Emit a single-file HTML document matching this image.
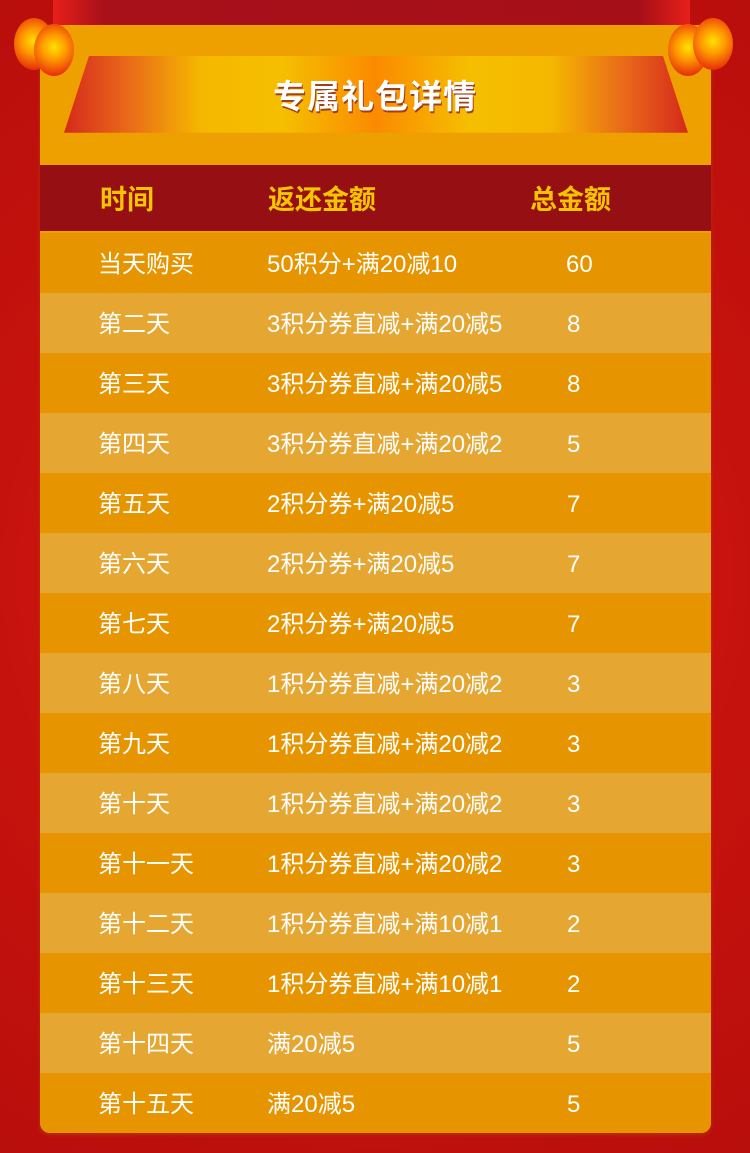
<!DOCTYPE html>
<html><head><meta charset="utf-8"><style>
*{margin:0;padding:0;box-sizing:border-box}
body{width:750px;height:1153px;overflow:hidden;background:#c8130f;font-family:"Liberation Sans","Noto Sans CJK SC",sans-serif;position:relative}
.bg{position:absolute;inset:0;background:radial-gradient(circle at 50% 50%,#d8180f,#b80e0c)}
.top{position:absolute;left:53px;top:0;width:637px;height:26px;background:linear-gradient(90deg,#e8201a 0,#a8101a 8%,#a50f18 92%,#e8201a 100%)}
.panel{position:absolute;left:40px;top:25px;width:671px;height:1108px;background:#eda000;border-radius:0 0 10px 10px;overflow:hidden;box-shadow:0 2px 4px #b8300a}
.banner{position:absolute;left:64px;top:56px;width:624px;height:80px;clip-path:polygon(4% 0,96% 0,100% 96%,0 96%);background:linear-gradient(90deg,#d52a1a 0,#e9681a 10%,#f5b800 22%,#f5bf00 35%,#fb8a00 50%,#f5bf00 65%,#f5b800 78%,#e9681a 90%,#d52a1a 100%);border-bottom:3px solid #b81a10}
.btitle{position:absolute;left:0;top:72px;width:750px;text-align:center;color:#fff;font-size:33px;font-weight:bold;letter-spacing:1px;text-shadow:1px 2px 0 #a0401a;line-height:50px}
.head{position:absolute;left:40px;top:165px;width:671px;height:66px;background:#960f12}
.h{position:absolute;top:167px;line-height:66px;color:#f5c400;font-size:27px;font-weight:bold}
.row{position:absolute;left:40px;width:671px;height:60px;color:#fff;font-size:24px}
.row span{position:absolute;top:2px;line-height:60px;height:58px}
.a{background:#e69500}.b{background:#e6a632}
.lant{position:absolute;width:40px;height:52px;border-radius:50%;background:radial-gradient(circle at 50% 45%,#ffe100 0,#ff9a00 35%,#e8300a 80%)}
</style></head><body>
<div class="bg"></div>
<div class="top"></div>
<div class="panel"></div>
<div class="banner"></div>
<div class="btitle">专属礼包详情</div>
<div class="lant" style="left:14px;top:18px"></div>
<div class="lant" style="left:34px;top:24px"></div>
<div class="lant" style="left:668px;top:24px"></div>
<div class="lant" style="left:693px;top:18px"></div>
<div class="head"></div>
<div class="h" style="left:100px">时间</div>
<div class="h" style="left:268px">返还金额</div>
<div class="h" style="left:530px">总金额</div>
<div class="row a" style="top:233px"><span style="left:58px">当天购买</span><span style="left:227px">50积分+满20减10</span><span style="left:526px">60</span></div>
<div class="row b" style="top:293px"><span style="left:58px">第二天</span><span style="left:227px">3积分券直减+满20减5</span><span style="left:527px">8</span></div>
<div class="row a" style="top:353px"><span style="left:58px">第三天</span><span style="left:227px">3积分券直减+满20减5</span><span style="left:527px">8</span></div>
<div class="row b" style="top:413px"><span style="left:58px">第四天</span><span style="left:227px">3积分券直减+满20减2</span><span style="left:527px">5</span></div>
<div class="row a" style="top:473px"><span style="left:58px">第五天</span><span style="left:227px">2积分券+满20减5</span><span style="left:527px">7</span></div>
<div class="row b" style="top:533px"><span style="left:58px">第六天</span><span style="left:227px">2积分券+满20减5</span><span style="left:527px">7</span></div>
<div class="row a" style="top:593px"><span style="left:58px">第七天</span><span style="left:227px">2积分券+满20减5</span><span style="left:527px">7</span></div>
<div class="row b" style="top:653px"><span style="left:58px">第八天</span><span style="left:227px">1积分券直减+满20减2</span><span style="left:527px">3</span></div>
<div class="row a" style="top:713px"><span style="left:58px">第九天</span><span style="left:227px">1积分券直减+满20减2</span><span style="left:527px">3</span></div>
<div class="row b" style="top:773px"><span style="left:58px">第十天</span><span style="left:227px">1积分券直减+满20减2</span><span style="left:527px">3</span></div>
<div class="row a" style="top:833px"><span style="left:58px">第十一天</span><span style="left:227px">1积分券直减+满20减2</span><span style="left:527px">3</span></div>
<div class="row b" style="top:893px"><span style="left:58px">第十二天</span><span style="left:227px">1积分券直减+满10减1</span><span style="left:527px">2</span></div>
<div class="row a" style="top:953px"><span style="left:58px">第十三天</span><span style="left:227px">1积分券直减+满10减1</span><span style="left:527px">2</span></div>
<div class="row b" style="top:1013px"><span style="left:58px">第十四天</span><span style="left:227px">满20减5</span><span style="left:527px">5</span></div>
<div class="row a" style="top:1073px;height:60px;border-radius:0 0 10px 10px"><span style="left:58px">第十五天</span><span style="left:227px">满20减5</span><span style="left:527px">5</span></div>
</body></html>
